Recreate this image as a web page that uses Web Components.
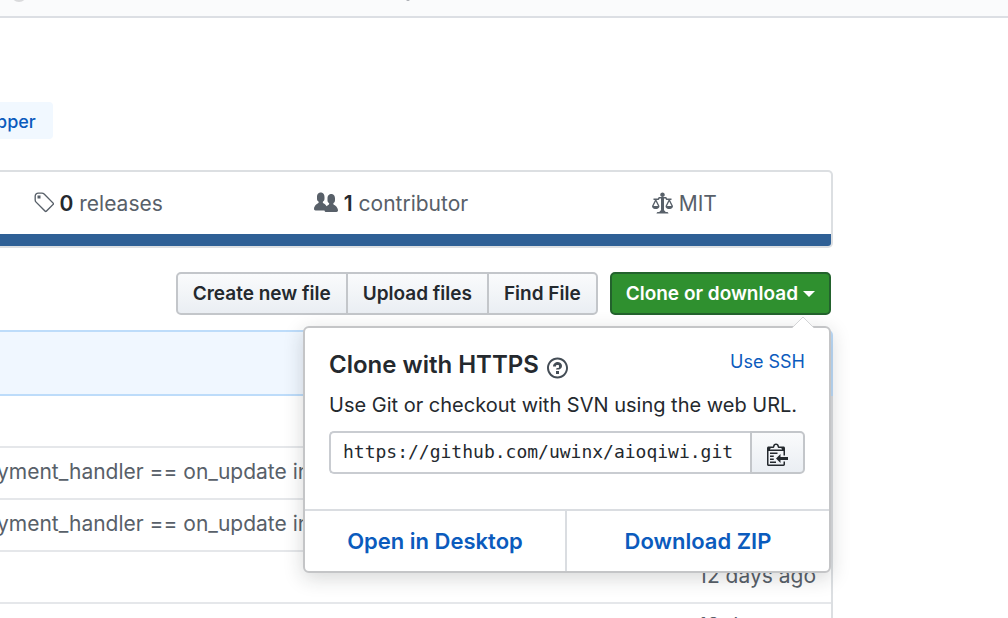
<!DOCTYPE html>
<html lang="en">
<head>
<meta charset="utf-8">
<meta name="viewport" content="width=device-width, initial-scale=1">
<title>Repository</title>
<style>
  html, body { height: 100%; }
  body { margin: 0; overflow: hidden; background: #fff; color: #24292e;
    font-family: Inter, "Liberation Sans", sans-serif; font-size: 20px; line-height: 30px; }
</style>
</head>
<body>
<repo-page></repo-page>
<script>
const define = (name, html) => customElements.define(name, class extends HTMLElement {
  constructor() {
    super();
    const t = document.createElement('template');
    t.innerHTML = html;
    this.attachShadow({ mode: 'open' }).append(t.content.cloneNode(true));
  }
});

const ICONS = {
  tag: [14, 'M7.73 1.73C7.26 1.26 6.62 1 5.96 1H3.5C2.13 1 1 2.13 1 3.5v2.47c0 .66.27 1.3.73 1.77l6.06 6.06c.39.39 1.02.39 1.41 0l4.59-4.59a.996.996 0 0 0 0-1.41L7.73 1.73zM2.38 7.09c-.31-.3-.47-.7-.47-1.13V3.5c0-.88.72-1.59 1.59-1.59h2.47c.42 0 .83.16 1.13.47l6.14 6.13-4.73 4.73-6.13-6.15zM3.01 3h2v2H3V3h.01z'],
  people: [16, 'M16 12.999c0 .439-.45 1-1 1H7.995c-.539 0-.994-.447-.995-.999H1c-.54 0-1-.561-1-1 0-2.634 3-4 3-4s.229-.409 0-1c-.841-.621-1.058-.59-1-3 .058-2.419 1.367-3 2.5-3s2.442.58 2.5 3c.058 2.41-.159 2.379-1 3-.229.59 0 1 0 1s1.549.711 2.42 2.088C9.196 9.369 10 8.999 10 8.999s.229-.409 0-1c-.841-.62-1.058-.59-1-3 .058-2.419 1.367-3 2.5-3s2.437.581 2.495 3c.059 2.41-.158 2.38-1 3-.229.59 0 1 0 1s3.005 1.366 3.005 4'],
  law: [14, 'M7 4c-.83 0-1.5-.67-1.5-1.5S6.17 1 7 1s1.5.67 1.5 1.5S7.83 4 7 4zm7 6c0 1.11-.89 2-2 2h-1c-1.11 0-2-.89-2-2l2-4h-1c-.55 0-1-.45-1-1H8v8c.42 0 1 .45 1 1h1c.42 0 1 .45 1 1H3c0-.55.58-1 1-1h1c0-.55.58-1 1-1h.03L6 5H5c0 .55-.45 1-1 1H3l2 4c0 1.11-.89 2-2 2H2c-1.11 0-2-.89-2-2l2-4H1V5h3c0-.55.45-1 1-1h4c.55 0 1 .45 1 1h3v1h-1l2 4zM2.5 7L1 10h3L2.5 7zM13 10l-1.5-3-1.5 3h3z'],
  question: [14, 'M6 10h2v2H6v-2zm4-3.5C10 8.64 8 9 8 9H6c0-.55.45-1 1-1h.5c.28 0 .5-.22.5-.5v-1c0-.28-.22-.5-.5-.5h-1c-.28 0-.5.22-.5.5V7H4c0-1.5 1.5-3 3-3s3 1 3 2.5zM7 2.3c3.14 0 5.7 2.56 5.7 5.7s-2.56 5.7-5.7 5.7A5.71 5.71 0 0 1 1.3 8c0-3.14 2.56-5.7 5.7-5.7zM7 1C3.14 1 0 4.14 0 8s3.14 7 7 7 7-3.14 7-7-3.14-7-7-7z'],
  clippy: [14, 'M2 13h4v1H2v-1zm5-6H2v1h5V7zm2 3V8l-3 3 3 3v-2h5v-2H9zM4.5 9H2v1h2.5V9zM2 12h2.5v-1H2v1zm9 1h1v2c-.02.28-.11.52-.3.7-.19.18-.42.28-.7.3H1c-.55 0-1-.45-1-1V4c0-.55.45-1 1-1h3c0-1.11.89-2 2-2 1.11 0 2 .89 2 2h3c.55 0 1 .45 1 1v5h-1V6H1v9h10v-2zM2 5h8c0-.55-.45-1-1-1H8c-.55 0-1-.45-1-1s-.45-1-1-1-1 .45-1 1-.45 1-1 1H3c-.55 0-1 .45-1 1z']
};

customElements.define('oct-icon', class extends HTMLElement {
  constructor() { super(); this.attachShadow({ mode: 'open' }); }
  connectedCallback() {
    const [w, d] = ICONS[this.getAttribute('name')];
    this.shadowRoot.innerHTML = `<style>:host{display:inline-flex;flex:none}svg{display:block;height:24px;fill:currentColor}</style>
      <svg viewBox="0 0 ${w} 16" width="${w * 24 / 16}" aria-hidden="true"><path fill-rule="evenodd" d="${d}"/></svg>`;
  }
});

define('repo-header', `
<style>
  :host { display: block; height: 16px; background: #fafbfc; border-bottom: 2px solid #dcdfe4; }
  svg { display: block; }
</style>
<svg width="420" height="4" aria-hidden="true"><circle cx="19" cy="-6" r="8" fill="#d9dadc"/><circle cx="408" cy="-1" r="2" fill="#a9adb2"/></svg>`);

define('topic-tag', `
<style>
  :host { display: inline-block; }
  a { display: block; margin-left: -8px; padding: 5px 17px 2px 4px; border-radius: 0 4px 4px 0;
    background: #f1f8ff; color: #0b5bbd; font-size: 18px; font-weight: 500; text-decoration: none; }
</style>
<a href="#topic"><slot></slot></a>`);

define('stat-item', `
<style>
  :host { display: flex; align-items: center; justify-content: center; gap: 6px; height: 62px; color: #586069; line-height: 30px; }
  a { color: inherit; text-decoration: none; font-size: 21px; padding-top: 2px; }
  ::slotted(b) { color: #24292e; font-weight: 600; }
</style>
<slot name="icon"></slot><a href="#stat"><slot></slot></a>`);

define('repo-summary', `
<style>
  :host { display: block; border: 2px solid #dcdfe2; border-left: 0; border-radius: 0 5px 5px 0; overflow: hidden; }
  .stats { display: grid; grid-template-columns: repeat(3, 1fr); margin-left: -49px; }
  .lang { height: 12px; background: #2f6096; }
</style>
<div class="stats">
  <stat-item><oct-icon slot="icon" name="tag"></oct-icon><b>0</b> releases</stat-item>
  <stat-item><oct-icon slot="icon" name="people"></oct-icon><b>1</b> contributor</stat-item>
  <stat-item><oct-icon slot="icon" name="law"></oct-icon>MIT</stat-item>
</div>
<div class="lang"></div>`);

define('action-bar', `
<style>
  :host { display: flex; justify-content: flex-end; gap: 12px; padding-right: 2px; }
  .group { display: flex; }
  button { font: inherit; font-size: 19px; font-weight: 600; line-height: 30px; padding: 5px 15px 4px; margin: 0; white-space: nowrap;
    color: #24292e; border: 2px solid #c3c6ca; background: linear-gradient(#fafbfc, #eaeef3); }
  .group button + button { margin-left: -2px; }
  .group button:first-child { border-radius: 5px 0 0 5px; }
  .group button:last-child { border-radius: 0 5px 5px 0; }
  .anchor { position: relative; }
  .primary { display: flex; align-items: center; gap: 5px; padding-left: 14px; padding-right: 14px; color: #fff; border-color: #23622d; border-radius: 5px; background: #2f902f; }
  .caret { border: 6px solid transparent; border-top-color: #fff; border-bottom: 0; }
  clone-popover { position: absolute; z-index: 2; right: 0; top: calc(100% + 11px); }
</style>
<div class="group"><button type="button">Create new file</button><button type="button">Upload files</button><button type="button">Find File</button></div>
<div class="anchor">
  <button class="primary" type="button" aria-expanded="true">Clone or download<span class="caret"></span></button>
  <clone-popover></clone-popover>
</div>`);

define('clone-popover', `
<style>
  :host { display: block; box-sizing: border-box; width: 528px; border: 2px solid #c4c5c7; border-radius: 6px;
    background: #fff; box-shadow: 0 5px 20px rgba(27,31,35,.18); }
  .arrow { position: absolute; right: 15px; top: -12px; display: block; }
  .body { padding: 22px 24px 35px; }
  .head { display: flex; justify-content: space-between; align-items: flex-start; }
  h2 { display: flex; align-items: center; gap: 8px; margin: 0; font-size: 24px; line-height: 30px; font-weight: 600; }
  h2 a { display: flex; color: #444d56; padding-top: 6px; }
  a { color: #0b5bbd; text-decoration: none; }
  .ssh { font-size: 18px; line-height: 24px; }
  label { display: block; margin: 10px 0 11px; font-size: 20px; line-height: 30px; white-space: nowrap; }
  .url { display: flex; }
  input { flex: 1; min-width: 0; box-sizing: border-box; height: 43px; margin: 0; padding: 0 12px 2px; border: 2px solid #c9ccd1; border-right: 0;
    border-radius: 5px 0 0 5px; background: #fff; color: #24292e; font: 18px "DejaVu Sans Mono", monospace; outline: 0; }
  button { display: flex; align-items: center; justify-content: center; width: 55px; margin: 0; padding: 3px 0 0; color: #24292e;
    border: 2px solid #c3c6ca; border-radius: 0 5px 5px 0; background: linear-gradient(#fafbfc, #eaeef3); }
  .foot { display: grid; grid-template-columns: 1fr 1fr; border-top: 2px solid #dadde1; }
  .foot a { padding: 15px 0; text-align: center; font-size: 22px; line-height: 30px; font-weight: 600; }
  .foot a:first-child { border-right: 2px solid #dadde1; }
</style>
<svg class="arrow" width="22" height="13" aria-hidden="true"><path d="M0 12 11 1 22 12z" fill="#fff"/><path d="M0 12 11 1 22 12" fill="none" stroke="#d4d5d7"/></svg>
<div class="body">
  <div class="head"><h2>Clone with HTTPS <a href="#help" aria-label="Which remote URL should I use?"><oct-icon name="question"></oct-icon></a></h2><a class="ssh" href="#ssh">Use SSH</a></div>
  <label for="url">Use Git or checkout with SVN using the web URL.</label>
  <div class="url"><input id="url" type="text" readonly value="https://github.com/uwinx/aioqiwi.git"><button type="button" aria-label="Copy"><oct-icon name="clippy"></oct-icon></button></div>
</div>
<div class="foot"><a href="#desktop">Open in Desktop</a><a href="#zip">Download ZIP</a></div>`);

define('file-list', `
<style>
  :host { display: block; }
  .tease { height: 62px; border: 2px solid #bddcfa; border-left: 0; background: #f0f7ff; border-radius: 0 5px 0 0; }
  .files { border-right: 2px solid #dcdfe2; }
  table { width: 100%; border-collapse: separate; border-spacing: 0; color: #586069; font-size: 21px; line-height: 30px; }
  td { box-sizing: border-box; height: 52px; padding: 0 0 2px; white-space: nowrap; border-top: 2px solid #e5e7ea; }
  tr:first-child td { border-top: 0; height: 50px; }
  tr:last-child td { vertical-align: top; padding-top: 7px; }
  .age { text-align: right; padding-right: 15px; }
  .msg { display: block; margin-left: -3px; }
</style>
<div class="tease"></div>
<div class="files"><table>
  <tr><td></td><td class="age"></td></tr>
  <tr><td><span class="msg">yment_handler == on_update in</span></td><td class="age"></td></tr>
  <tr><td><span class="msg">yment_handler == on_update in</span></td><td class="age"></td></tr>
  <tr><td></td><td class="age">12 days ago</td></tr>
  <tr><td></td><td class="age">12 days ago</td></tr>
</table></div>`);

define('repo-page', `
<style>
  :host { display: block; height: 100vh; overflow: hidden; }
  main { display: flex; flex-direction: column; margin-right: 175px; }
  .topics { display: flex; padding: 84px 0 31px; }
  action-bar { padding-top: 24px; padding-bottom: 15px; }
</style>
<repo-header></repo-header>
<main>
  <div class="topics"><topic-tag>pper</topic-tag></div>
  <repo-summary></repo-summary>
  <action-bar></action-bar>
  <file-list></file-list>
</main>`);
</script>
</body>
</html>
